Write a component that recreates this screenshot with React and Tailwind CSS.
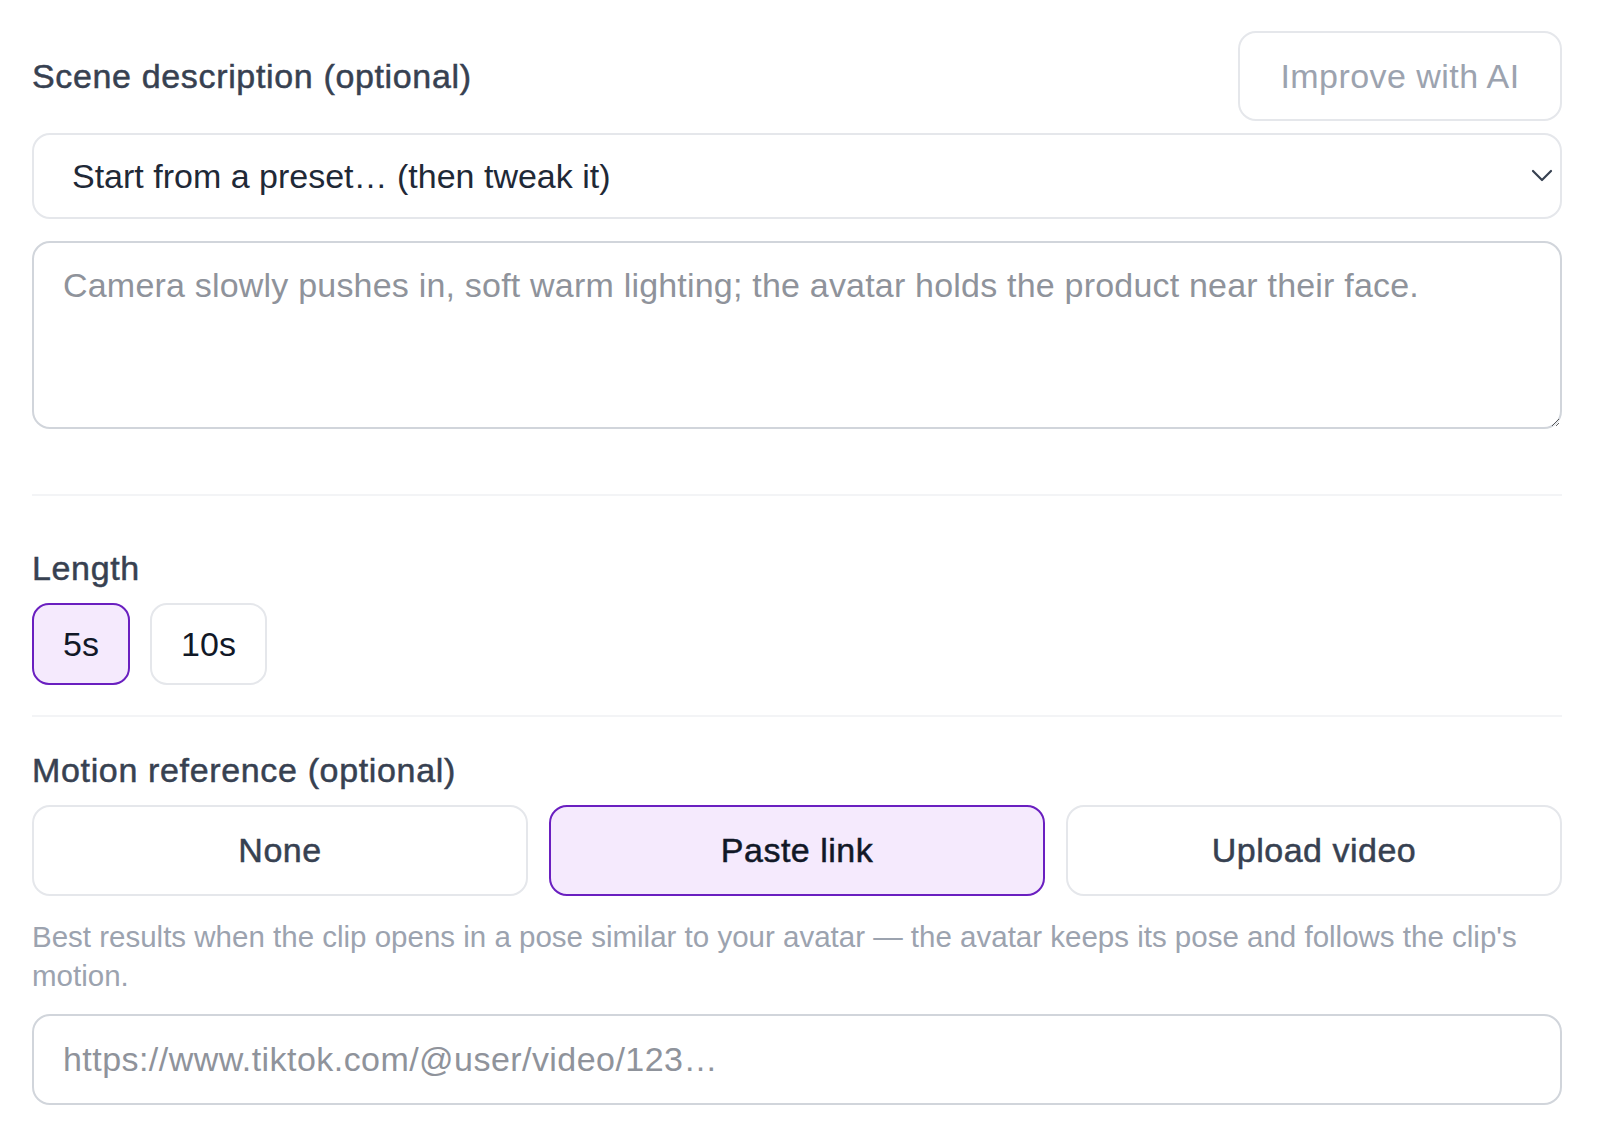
import React from "react";

const font = { fontFamily: '"Liberation Sans", Arial, sans-serif' };

function Label({ children }) {
  return (
    <div className="text-[34px] leading-[40px] text-[#374151] tracking-[0.65px] [-webkit-text-stroke:0.5px_currentColor]">
      {children}
    </div>
  );
}

export default function App() {
  return (
    <div className="min-h-[1135px] w-[1600px] bg-white" style={font}>
      <div className="w-[1530px] ml-[32px] pt-[31px] flex flex-col">
        <div className="flex items-center justify-between h-[90px]">
          <Label>Scene description (optional)</Label>
          <button className="w-[324px] h-[90px] rounded-[18px] border-2 border-[#e5e7eb] bg-white text-[34px] tracking-[0.45px] text-[#9ca3af] flex items-center justify-center">
            Improve with AI
          </button>
        </div>

        <div className="relative mt-[12px]">
          <select
            className="w-full h-[86px] appearance-none rounded-[18px] border-2 border-[#e5e7eb] bg-white pl-[38px] text-[34px] text-[#1f2937] outline-none"
            style={font}
            defaultValue=""
          >
            <option value="">Start from a preset… (then tweak it)</option>
          </select>
          <svg
            className="absolute right-[9px] top-[36px] pointer-events-none"
            width="22"
            height="14"
            viewBox="0 0 22 14"
            fill="none"
          >
            <polyline points="2,2 11,11 20,2" stroke="#374151" strokeWidth="2.2" strokeLinecap="round" strokeLinejoin="round" />
          </svg>
        </div>

        <textarea
          className="mt-[22px] w-full h-[188px] rounded-[18px] border-2 border-[#d1d5db] bg-white px-[29px] py-[17px] text-[34px] leading-[51px] tracking-[0.2px] text-[#1f2937] placeholder:text-[#8f939b] outline-none"
          style={font}
          placeholder="Camera slowly pushes in, soft warm lighting; the avatar holds the product near their face."
        />

        <div className="mt-[65px] h-[2px] bg-[#f3f4f6]" />

        <div className="mt-[52px]">
          <Label>Length</Label>
        </div>
        <div className="mt-[15px] flex gap-[20px]">
          <button className="w-[98px] h-[82px] rounded-[17px] border-2 border-[#6a1fc0] bg-[#f5eafd] text-[34px] text-[#111827]">
            5s
          </button>
          <button className="w-[117px] h-[82px] rounded-[17px] border-2 border-[#e5e7eb] bg-white text-[34px] text-[#111827]">
            10s
          </button>
        </div>

        <div className="mt-[30px] h-[2px] bg-[#f3f4f6]" />

        <div className="mt-[33px]">
          <Label>Motion reference (optional)</Label>
        </div>
        <div className="mt-[15px] grid grid-cols-3 gap-[21px]">
          <button className="h-[91px] rounded-[18px] border-2 border-[#e5e7eb] bg-white text-[34px] text-[#374151] tracking-[0.5px] [-webkit-text-stroke:0.5px_currentColor]">
            None
          </button>
          <button className="h-[91px] rounded-[18px] border-2 border-[#6a1fc0] bg-[#f5eafd] text-[34px] text-[#111827] tracking-[0.5px] [-webkit-text-stroke:0.5px_currentColor]">
            Paste link
          </button>
          <button className="h-[91px] rounded-[18px] border-2 border-[#e5e7eb] bg-white text-[34px] text-[#374151] tracking-[0.5px] [-webkit-text-stroke:0.5px_currentColor]">
            Upload video
          </button>
        </div>

        <p className="mt-[21px] text-[29.5px] leading-[39px] text-[#9ca3af]">
          Best results when the clip opens in a pose similar to your avatar — the avatar keeps its pose and follows the clip's motion.
        </p>

        <input
          className="mt-[19px] w-full h-[91px] rounded-[18px] border-2 border-[#d1d5db] bg-white px-[29px] text-[34px] tracking-[0.45px] text-[#1f2937] placeholder:text-[#8f939b] outline-none"
          style={font}
          placeholder="https://www.tiktok.com/@user/video/123…"
        />
      </div>
    </div>
  );
}
